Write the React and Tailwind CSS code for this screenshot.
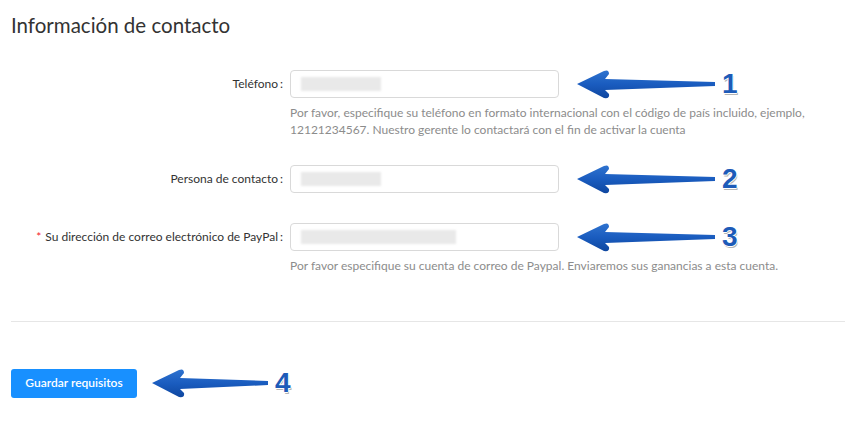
const LABELS = {
  TITLE: "Información de contacto",
  PHONE: "Teléfono",
  PHONE_HELP:
    "Por favor, especifique su teléfono en formato internacional con el código de país incluido, ejemplo, 12121234567. Nuestro gerente lo contactará con el fin de activar la cuenta",
  CONTACT: "Persona de contacto",
  PAYPAL: "Su dirección de correo electrónico de PayPal",
  PAYPAL_HELP:
    "Por favor especifique su cuenta de correo de Paypal. Enviaremos sus ganancias a esta cuenta.",
  SAVE: "Guardar requisitos",
};

function Arrow({ length = 140, num }) {
  const h = 32;
  const d = `M2,16 L29,3 Q34,1 34,6 L30,11 L${length - 2},14 L${length - 2},18 L30,22 L34,26 Q35,31 29,30 Z`;
  return (
    <div className="flex items-center">
      <svg width={length} height={h} viewBox={`0 0 ${length} ${h}`}>
        <defs>
          <linearGradient id={`ag${num}`} x1="0" y1="0" x2="0" y2="1">
            <stop offset="0" stopColor="#2f73cf" />
            <stop offset="0.5" stopColor="#1a5cbf" />
            <stop offset="1" stopColor="#0f47a0" />
          </linearGradient>
        </defs>
        <path d={d} fill={`url(#ag${num})`} />
      </svg>
      <span className="ml-[5px] text-[28px] leading-none font-bold text-[#1d5bb8] [font-family:'Liberation_Sans',Arial,sans-serif] [text-shadow:1px_0_0_#fff,-1px_0_0_#fff,0_1px_0_#fff,0_-1px_0_#fff,1px_2px_0_#b5b5b5]">
        {num}
      </span>
    </div>
  );
}

function Field({ label, required, barWidth, help, arrow }) {
  return (
    <div>
      <div className="flex items-center">
        <div className="w-[290px] pr-[7px] text-right text-[12px] text-[#333]">
          {required && <span className="mr-[4px] text-[#f5222d]">*</span>}
          {label}
          <span className="ml-[2px]">:</span>
        </div>
        <div className="flex h-[28px] w-[269px] items-center rounded-[4px] border border-[#d9d9d9] bg-white px-[10px]">
          <div
            className="h-[14px] bg-[#e9e9e9] blur-[1px]"
            style={{ width: barWidth }}
          />
        </div>
        <div className="ml-[16px]">
          <Arrow length={arrow.length} num={arrow.num} />
        </div>
      </div>
      {help && (
        <p className="mt-[4px] ml-[290px] w-[545px] text-[12px] leading-[17px] text-[#8c8c8c]">
          {help}
        </p>
      )}
    </div>
  );
}

export default function App() {
  return (
    <div className="min-h-[439px] w-[865px] bg-white pt-[12px] [font-family:Lato,'Noto_Sans',sans-serif]">
      <h2 className="pl-[11px] text-[20.5px] leading-[26px] text-[#333]">
        {LABELS.TITLE}
      </h2>

      <div className="mt-[30px]">
        <Field
          label={LABELS.PHONE}
          barWidth={80}
          help={LABELS.PHONE_HELP}
          arrow={{ length: 142, num: "1" }}
        />
      </div>
      <div className="mt-[25px]">
        <Field
          label={LABELS.CONTACT}
          barWidth={80}
          arrow={{ length: 142, num: "2" }}
        />
      </div>
      <div className="mt-[26px]">
        <Field
          label={LABELS.PAYPAL}
          required
          barWidth={155}
          help={LABELS.PAYPAL_HELP}
          arrow={{ length: 142, num: "3" }}
        />
      </div>

      <div className="mt-[47px] mr-[20px] ml-[11px] border-t border-[#e6e6e6]" />

      <div className="mt-[45px] flex items-center pl-[11px]">
        <button className="h-[29px] w-[126px] rounded-[3px] bg-[#1890ff] text-[12px] font-semibold text-white">
          {LABELS.SAVE}
        </button>
        <div className="ml-[13px]">
          <Arrow length={120} num="4" />
        </div>
      </div>
    </div>
  );
}
